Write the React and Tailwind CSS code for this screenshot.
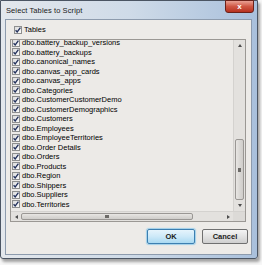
import React from "react";

const tables = [
  "dbo.battery_backup_versions",
  "dbo.battery_backups",
  "dbo.canonical_names",
  "dbo.canvas_app_cards",
  "dbo.canvas_apps",
  "dbo.Categories",
  "dbo.CustomerCustomerDemo",
  "dbo.CustomerDemographics",
  "dbo.Customers",
  "dbo.Employees",
  "dbo.EmployeeTerritories",
  "dbo.Order Details",
  "dbo.Orders",
  "dbo.Products",
  "dbo.Region",
  "dbo.Shippers",
  "dbo.Suppliers",
  "dbo.Territories",
];

const Check = () => (
  <div className="w-[8px] h-[8px] shrink-0 border border-[#8e8f8f] bg-gradient-to-br from-[#dcdcdc] to-[#fbfbfb] flex items-center justify-center">
    <svg width="6" height="6" viewBox="0 0 6 6">
      <path d="M0.6 3.2 L2.2 5 L5.4 0.6" fill="none" stroke="#23315c" strokeWidth="1.3" />
    </svg>
  </div>
);

const Arrow = ({ dir }) => {
  const pts = {
    up: "0,3 2,0 4,3",
    down: "0,0 2,3 4,0",
    left: "3,0 0,2 3,4",
    right: "0,0 3,2 0,4",
  }[dir];
  const vertical = dir === "up" || dir === "down";
  return (
    <svg width={vertical ? 4 : 3} height={vertical ? 3 : 4} viewBox={vertical ? "0 0 4 3" : "0 0 3 4"}>
      <polygon points={pts} fill="#4d4d4d" />
    </svg>
  );
};

export default function App() {
  return (
    <div
      className="w-[262px] h-[265px] bg-[#f7f7f7] overflow-hidden text-black"
      style={{ fontFamily: '"Liberation Sans", Arial, sans-serif' }}
    >
      <div className="w-[258px] h-[259px] flex flex-col border border-[#4b5563] rounded-b-[3px] bg-gradient-to-r from-[#e3e7ec] via-[#cfdbe8] to-[#a9c0dc] shadow-[2px_3px_3px_rgba(0,0,0,0.35)]">
        {/* Title bar */}
        <div className="h-[18px] flex items-start pl-[5px] shrink-0">
          <span className="text-[7.5px] mt-[4px] tracking-[0.1px] text-[#1a1a1a]">Select Tables to Script</span>
          <div className="ml-auto mr-[3px] w-[29px] h-[13px] -mt-[1px] rounded-b-[3px] border border-[#6b2119] bg-gradient-to-b from-[#e8a093] via-[#cf5643] to-[#b7311f] flex items-center justify-center">
            <span className="text-white text-[8px] font-bold leading-none">x</span>
          </div>
        </div>

        {/* Client area */}
        <div className="flex-1 ml-[4px] mr-[5px] mb-[3px] border border-[#8d9bad] bg-[#edebe8] flex flex-col">
          <div className="flex items-center gap-[2px] pl-[8px] mt-[6px] h-[8px]">
            <Check />
            <span className="text-[7.5px] leading-none">Tables</span>
          </div>

          {/* List */}
          <div className="ml-[4px] mt-[5px] w-[236px] h-[183px] border border-[#9b9894] bg-[#eceae7] flex flex-col">
            <div className="flex flex-1 min-h-0">
              <div className="flex-1 overflow-hidden">
                <div className="-mt-[2px] pl-[1px]">
                  {tables.map((t) => (
                    <div key={t} className="h-[9.5px] flex items-center gap-[2px]">
                      <Check />
                      <span className="text-[7.5px] leading-none whitespace-nowrap">{t}</span>
                    </div>
                  ))}
                </div>
              </div>
              {/* Vertical scrollbar */}
              <div className="w-[12px] bg-[#e3e1de] border-l border-[#d4d2cf] flex flex-col">
                <div className="h-[10px] flex items-center justify-center">
                  <Arrow dir="up" />
                </div>
                <div className="flex-1 flex flex-col justify-end px-[1px]">
                  <div className="h-[61px] rounded-[2px] border border-[#9a9794] bg-gradient-to-r from-[#e8e6e3] via-[#dad8d5] to-[#cfcdca] flex items-center justify-center">
                    <div className="w-[3px] h-[4px] bg-[#6d6b68]" />
                  </div>
                </div>
                <div className="h-[11px] flex items-center justify-center">
                  <Arrow dir="down" />
                </div>
              </div>
            </div>
            {/* Horizontal scrollbar */}
            <div className="h-[10px] flex bg-[#e3e1de] border-t border-[#d4d2cf]">
              <div className="w-[10px] flex items-center justify-center">
                <Arrow dir="left" />
              </div>
              <div className="flex-1 flex items-center py-[1px] pr-[30px]">
                <div className="h-full flex-1 rounded-[2px] border border-[#9a9794] bg-gradient-to-b from-[#e8e6e3] via-[#dad8d5] to-[#cfcdca] flex items-center justify-center">
                  <div className="w-[4px] h-[3px] bg-[#6d6b68]" />
                </div>
              </div>
              <div className="w-[10px] flex items-center justify-center">
                <Arrow dir="right" />
              </div>
              <div className="w-[12px] bg-[#dcdad7]" />
            </div>
          </div>

          {/* Buttons */}
          <div className="flex justify-end gap-[7px] mt-[7px] mr-[3px]">
            <button className="w-[48px] h-[15px] rounded-[2px] border border-[#3c7fb1] bg-gradient-to-b from-[#e6f4fc] via-[#cde9f8] to-[#a9d9f2] shadow-[0_0_1px_1px_rgba(110,190,235,0.6)] text-[7.5px] font-bold text-[#1a1a1a] flex items-center justify-center">
              OK
            </button>
            <button className="w-[46px] h-[15px] rounded-[2px] border border-[#707070] bg-gradient-to-b from-[#f4f4f4] via-[#e2e2e2] to-[#cfcfcf] text-[7.5px] font-bold text-[#1a1a1a] flex items-center justify-center">
              Cancel
            </button>
          </div>
        </div>
      </div>
    </div>
  );
}
